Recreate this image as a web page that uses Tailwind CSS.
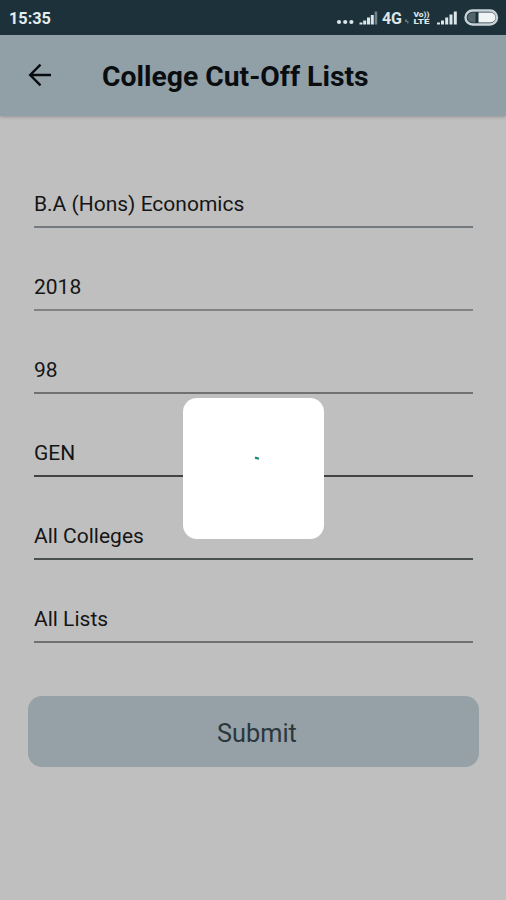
<!DOCTYPE html>
<html lang="en">
<head>
<meta charset="utf-8">
<title>College Cut-Off Lists</title>
<script src="https://cdn.jsdelivr.net/npm/@tailwindcss/browser@4"></script>
</head>
<body class="bg-[#bfbfbf] font-['Roboto',sans-serif]">
<div class="relative w-[506px] h-[900px] overflow-hidden bg-[#bfbfbf] text-[#151515]">
  <div class="h-[35px] bg-[#1d313b] flex items-center justify-between pl-[9px] pt-[3px]">
    <span class="text-[16.3px] leading-5 font-bold text-[#e4edf0]">15:35</span>
    <svg class="w-[170px] h-[24px]" viewBox="336 7 170 24" fill="#dce5e8">
      <circle cx="339" cy="22" r="2.100"/><circle cx="345.200" cy="22" r="2.100"/><circle cx="351.400" cy="22" r="2.100"/>
      <path d="M359.500 22.500h3v2h-3zM363.200 20.500h3v4h-3zM367 17.500h3v7h-3zM370.800 15h3v9.500h-3z"/>
      <path fill="#71838b" d="M374.600 11.500h2.600v13h-2.600z"/>
      <text x="382" y="24" font-size="16" font-weight="700" textLength="20">4G</text>
      <path fill="#60727a" d="M405 19.500h2v2.500h-2zM407 21h1.500v2.500h-1.500z"/>
      <text x="413.500" y="16.600" font-size="6.700" font-weight="900" textLength="16" lengthAdjust="spacingAndGlyphs">Vo))</text>
      <text x="413.500" y="24.200" font-size="6.700" font-weight="900" textLength="16" lengthAdjust="spacingAndGlyphs">LTE</text>
      <path d="M437 22.500h3v2h-3zM441 20.500h3v4h-3zM445.200 17.500h3v7h-3zM449.500 14.500h3v10h-3zM453.800 11.500h3v13h-3z"/>
      <rect x="465.500" y="10.500" width="31.500" height="14" rx="7" fill="none" stroke="#c9d3d7" stroke-width="2.400"/>
      <path fill="#52646c" d="M472.500 12.500h3v10h-3a5 5 0 0 1 0-10z"/>
      <path fill="#f1f4f5" d="M478.500 12.500h12a5 5 0 0 1 0 10h-12z"/>
    </svg>
  </div>
  <header class="h-[81px] bg-[#919fa7] flex items-center pl-[28px] shadow-[0_1px_3px_rgba(90,80,90,0.4)]">
    <svg class="w-6 h-6 -mt-[1px]" viewBox="0 0 24 24" fill="none" stroke="#080c0e" stroke-width="2.400"><path d="M23 12H2.500M12.500 1.700L2.200 12l10.300 10.300"/></svg>
    <h1 class="ml-[50px] mt-[2px] text-[28.3px] leading-8 font-bold text-[#090d10] whitespace-nowrap">College Cut-Off Lists</h1>
  </header>
  <main class="pt-[29px] px-[34px]">
    <div class="w-[439px]">
      <div class="h-[83px] flex items-end border-b-2 border-[#74787f] pb-2"><span class="text-[21px] leading-7">B.A (Hons) Economics</span></div>
      <div class="h-[83px] flex items-end border-b-2 border-[#808284] pb-2"><span class="text-[21px] leading-7">2018</span></div>
      <div class="h-[83px] flex items-end border-b-2 border-[#707272] pb-2"><span class="text-[21px] leading-7">98</span></div>
      <div class="h-[83px] flex items-end border-b-2 border-[#414343] pb-2"><span class="text-[21px] leading-7">GEN</span></div>
      <div class="h-[83px] flex items-end border-b-2 border-[#4a5050] pb-2"><span class="text-[21px] leading-7">All Colleges</span></div>
      <div class="h-[83px] flex items-end border-b-2 border-[#707272] pb-2"><span class="text-[21px] leading-7">All Lists</span></div>
    </div>
    <button class="block -ml-[6px] mt-[53px] w-[451px] h-[71px] rounded-[14px] bg-[#95a1a6] text-[25.3px] text-[#2b373d] pl-[7px] pt-[4px]">Submit</button>
  </main>
  <div class="absolute left-[183px] top-[397.500px] w-[141px] h-[141px] rounded-[14px] bg-white">
    <svg class="absolute left-[71px] top-[58px] w-[6px] h-[5px]" viewBox="0 0 6 5"><path d="M1 1.600L5 2.800" stroke="#168a76" stroke-width="2.200"/></svg>
  </div>
</div>
</body>
</html>
